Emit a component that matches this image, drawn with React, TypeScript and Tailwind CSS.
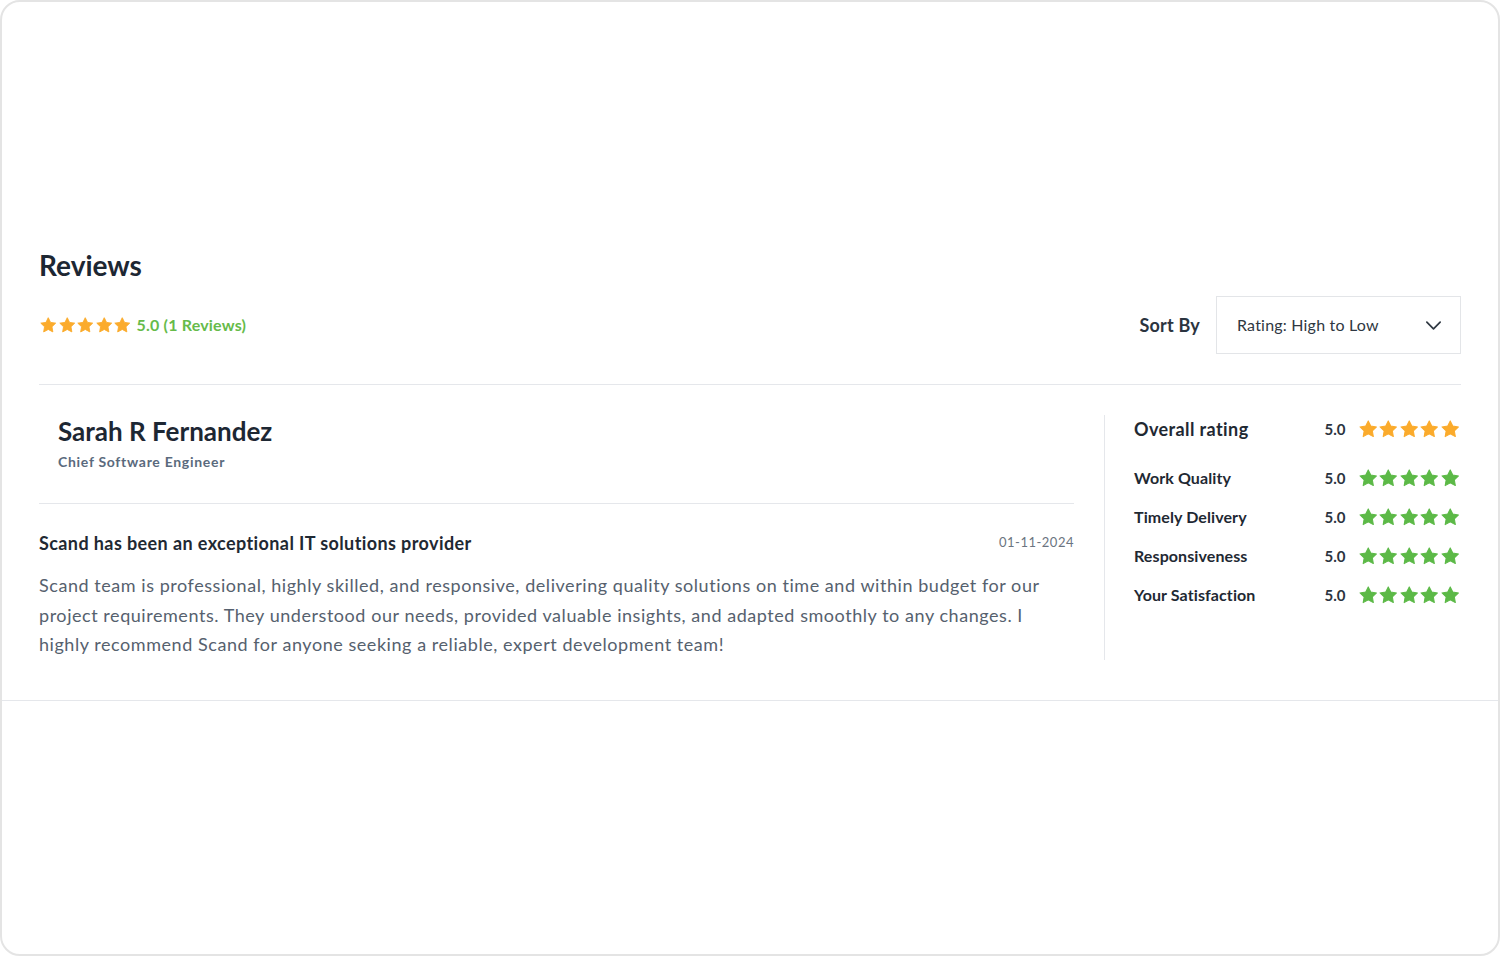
import React from 'react';

const STAR_PATH = 'M12 2.2l2.95 6.1 6.7.95-4.85 4.7 1.15 6.65L12 17.45 6.05 20.6l1.15-6.65L2.35 9.25l6.7-.95L12 2.2z';

const Star: React.FC<{ className: string }> = ({ className }) => (
  <svg viewBox="0 0 24 24" className={className} fill="currentColor" strokeLinejoin="round">
    <path d={STAR_PATH} stroke="currentColor" strokeWidth="1.2" />
  </svg>
);

const Stars: React.FC<{ color: string; size: string }> = ({ color, size }) => (
  <div className={`flex ${color}`}>
    {[0, 1, 2, 3, 4].map((i) => (
      <Star key={i} className={size} />
    ))}
  </div>
);

const categories = ['Work Quality', 'Timely Delivery', 'Responsiveness', 'Your Satisfaction'];

export default function App() {
  return (
    <div
      className="w-[1500px] h-[956px] bg-white border-2 border-[#e4e4e4] rounded-[20px] overflow-hidden text-[#1f2a37]"
      style={{ fontFamily: 'Lato, "Open Sans", sans-serif' }}
    >
      {/* Header */}
      <div className="px-[37px] pt-[246px]">
        <h2 className="text-[28px] leading-[34px] font-bold text-[#1d2733]">Reviews</h2>
        <div className="mt-[14px] pb-[30px] border-b border-[#e5e7eb] flex items-center justify-between">
          <div className="flex items-center gap-[5px]">
            <Stars color="text-[#fbab2c]" size="w-[18.5px] h-[18.5px]" />
            <span className="text-[16px] font-bold tracking-[0.2px] text-[#66bb4a]">5.0 (1 Reviews)</span>
          </div>
          <div className="flex items-center gap-[16px]">
            <span className="text-[18px] font-bold tracking-[0.2px] text-[#2b3440]">Sort By</span>
            <div className="w-[245px] h-[58px] border border-[#e3e5e8] flex items-center justify-between pl-[20px] pr-[17px]">
              <span className="text-[16px] tracking-[0.2px] text-[#2f3842]">Rating: High to Low</span>
              <svg viewBox="0 0 20 20" className="w-[19px] h-[19px] text-[#2f3842]" fill="none" stroke="currentColor" strokeWidth="1.8" strokeLinecap="round" strokeLinejoin="round">
                <path d="M3 6.5l7 7 7-7" />
              </svg>
            </div>
          </div>
        </div>
      </div>

      {/* Review */}
      <div className="border-b border-[#e5e7eb] pl-[37px] pr-[38px] pt-[30px] pb-[40px]">
        <div className="flex">
          <div className="w-[1035px]">
            <div className="pl-[19px] pb-[31px] border-b border-[#e5e7eb]">
              <div className="text-[26px] leading-[32px] font-bold text-[#1d2733]">Sarah R Fernandez</div>
              <div className="mt-[5px] text-[14px] leading-[20px] font-bold tracking-[0.7px] text-[#5a6a7d]">
                Chief Software Engineer
              </div>
            </div>
            <div className="pt-[27px] flex items-center justify-between">
              <div className="text-[18px] leading-[24px] font-bold tracking-[0.4px] text-[#1f2933]">
                Scand has been an exceptional IT solutions provider
              </div>
              <div className="text-[13px] tracking-[0.5px] text-[#6b7480]">01-11-2024</div>
            </div>
            <p className="mt-[16px] text-[18px] leading-[29.5px] tracking-[0.55px] text-[#56616e]">
              Scand team is professional, highly skilled, and responsive, delivering quality solutions on time and within budget for our project requirements. They understood our needs, provided valuable insights, and adapted smoothly to any changes. I highly recommend Scand for anyone seeking a reliable, expert development team!
            </p>
          </div>
          <div className="ml-[30px] border-l border-[#e5e7eb] pl-[29px] flex-1">
            <div className="flex items-center justify-between h-[30px] -mt-[1px]">
              <span className="text-[18px] font-bold tracking-[0.4px] text-[#1f2933]">Overall rating</span>
              <div className="flex items-center gap-[12px]">
                <span className="text-[15px] font-bold text-[#2b3440]">5.0</span>
                <Stars color="text-[#fbab2c]" size="w-[20.5px] h-[20.5px]" />
              </div>
            </div>
            <div className="mt-[19px] flex flex-col gap-[9px]">
              {categories.map((c) => (
                <div key={c} className="flex items-center justify-between h-[30px]">
                  <span className="text-[16px] font-bold tracking-[0.1px] text-[#1f2933]">{c}</span>
                  <div className="flex items-center gap-[12px]">
                    <span className="text-[15px] font-bold text-[#2b3440]">5.0</span>
                    <Stars color="text-[#5cb947]" size="w-[20.5px] h-[20.5px]" />
                  </div>
                </div>
              ))}
            </div>
          </div>
        </div>
      </div>
    </div>
  );
}
